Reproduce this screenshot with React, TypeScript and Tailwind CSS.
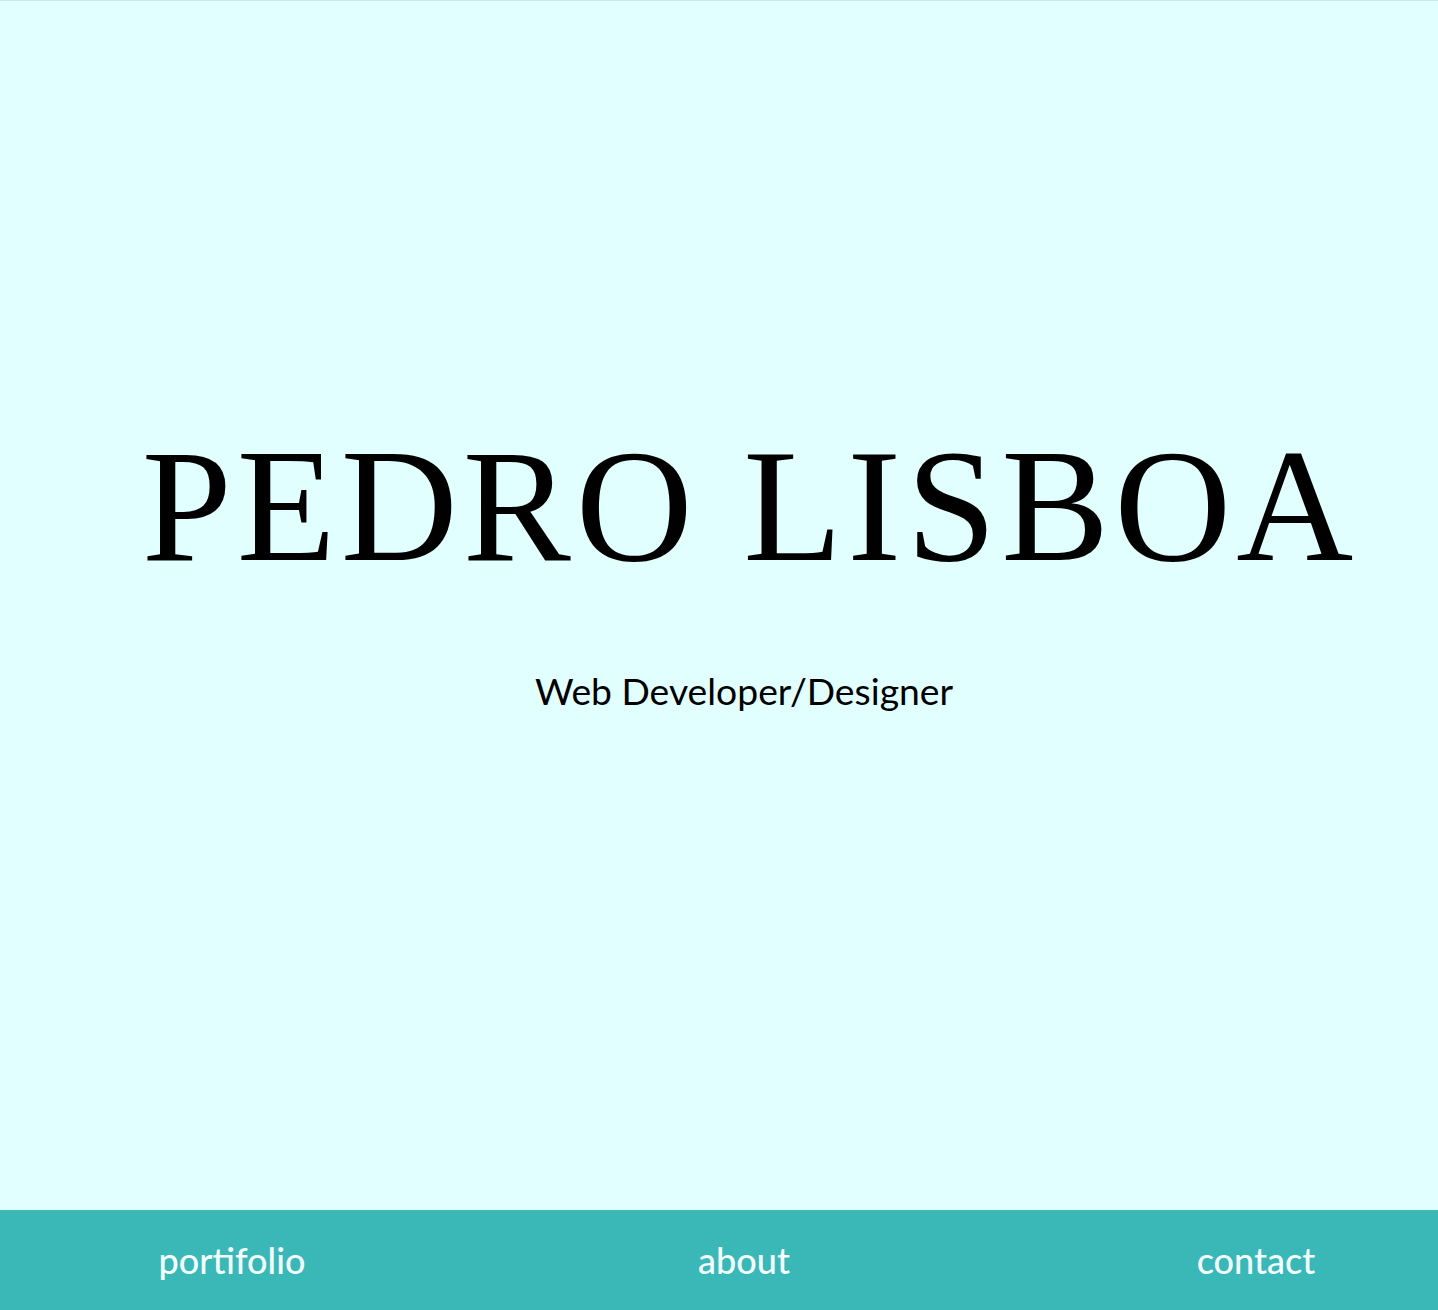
const links = ['portifolio', 'about', 'contact'];

export default function App() {
  return (
    <div className="min-h-[1310px] bg-[#e1ffff] border-t border-[#cde7ec] flex flex-col">
      <section className="h-[1209px] pl-[50px] pt-[424px] flex flex-col items-center">
        <h1
          className="ml-[12px] text-[162px] leading-none text-black tracking-[5px] whitespace-nowrap"
          style={{ fontFamily: '"Liberation Serif", "DejaVu Serif", serif' }}
        >
          PEDRO LISBOA
        </h1>
        <p
          className="mt-[85px] text-[37.3px] leading-none text-black"
          style={{ fontFamily: 'Lato, "Open Sans", sans-serif' }}
        >
          Web Developer/Designer
        </p>
      </section>
      <nav className="h-[100px] bg-[#39b8b7] flex items-center pl-[104px] gap-[256px]">
        {links.map((l) => (
          <a
            key={l}
            href="#"
            className="w-[256px] text-center text-[36px] leading-none text-[#f4ffff] font-medium"
            style={{ fontFamily: 'Lato, "Open Sans", sans-serif' }}
          >
            {l}
          </a>
        ))}
      </nav>
    </div>
  );
}
